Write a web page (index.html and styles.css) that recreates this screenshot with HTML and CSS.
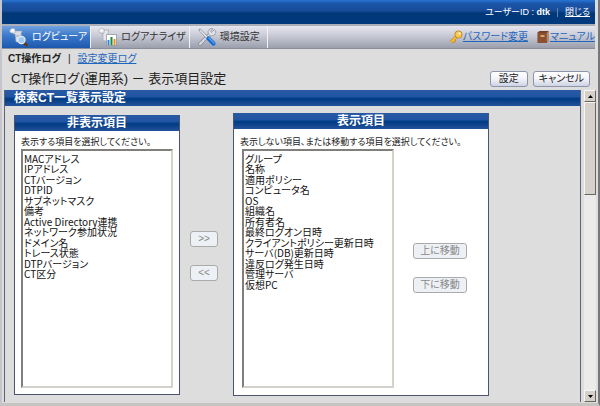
FILE: index.html
```html
<!DOCTYPE html>
<html lang="ja">
<head>
    <meta charset="UTF-8">
    <meta name="viewport" content="width=device-width, initial-scale=1.0">
    <title>CT操作ログ(運用系) - 表示項目設定</title>
    <link rel="stylesheet" href="styles.css">
</head>
<body>
<div class="window">

    <header class="topbar">
        <span>ユーザーID : <b>dtk</b></span>
        <span class="divider"></span>
        <a href="#">閉じる</a>
    </header>

    <div class="toolbar">
        <nav class="tabs">
            <a class="tab active" href="#">
                <svg class="tab-icon" viewBox="0 0 20 20">
                    <path d="M4 4h9l-1 3 2 8H7L6 7H4z" fill="#d9dde4" stroke="#98a2b3" stroke-width=".5"/>
                    <path d="M1 3q2-3 5-1v4H3Q0 6 1 3z" fill="#f4f5f8" stroke="#98a2b3" stroke-width=".5"/>
                    <path d="M7 9h5" stroke="#a1a9b7"/>
                    <path d="M15 16l2.500 2" stroke="#683716" stroke-width="2.800" stroke-linecap="round"/>
                    <circle cx="12.500" cy="13" r="3.600" fill="#9fccf4" stroke="#e4eaf2" stroke-width="1.200"/>
                </svg>
                ログビューア
            </a>
            <a class="tab" href="#">
                <svg class="tab-icon" viewBox="0 0 20 20">
                    <path d="M4 3h7l-1 3 1 8H5L5 6H3z" fill="#e6e7ea" stroke="#979ca7" stroke-width=".6"/>
                    <path d="M1 3q2-3 5-1v4H3Q0 6 1 3z" fill="#f4f5f8" stroke="#979ca7" stroke-width=".6"/>
                    <path d="M8.500 7.500h10v11h-10z" fill="#fff" stroke="#858b91" stroke-width=".7"/>
                    <path d="M10.500 18v-5" stroke="#2c86e4" stroke-width="2"/>
                    <path d="M13.500 18v-8" stroke="#158a3a" stroke-width="2"/>
                    <path d="M16.500 18v-6" stroke="#ee9426" stroke-width="2"/>
                </svg>
                ログアナライザ
            </a>
            <a class="tab" href="#">
                <svg class="tab-icon" viewBox="0 0 20 20">
                    <path d="M3 17L13 7" stroke="#858b95" stroke-width="3.600" stroke-linecap="round"/>
                    <path d="M3 17L13 7" stroke="#d9dce2" stroke-width="2.200" stroke-linecap="round"/>
                    <path d="M17.500 2.500l-3 3-1-1 2.500-3q-4-.5-5 3-.4 3.500 3 4.500 4.500 0 5-4z" fill="#e0e2e7" stroke="#858b95" stroke-width=".7"/>
                    <path d="M2 2l2 .5 7 7.500-1.500 1.500-7-7.500z" fill="#e5e6ea" stroke="#7e8590" stroke-width=".7"/>
                    <path d="M11.500 11.500l5 5" stroke="#176bd0" stroke-width="4.200" stroke-linecap="round"/>
                    <path d="M12 11l5 5" stroke="#59a8f4" stroke-width="1.200" stroke-linecap="round"/>
                </svg>
                環境設定
            </a>
        </nav>
        <div class="tools">
            <a class="tool" href="#">
                <svg class="tool-icon" viewBox="0 0 14 14">
                    <path d="M8 6l-6 6M4 10l2 2" stroke="#bb7a11" stroke-width="3"/>
                    <path d="M8 6l-6 6M4 10l1.500 1.500" stroke="#f6bd36" stroke-width="1.800"/>
                    <circle cx="9.500" cy="4.500" r="3.600" fill="#f9c94d" stroke="#ba7b16" stroke-width=".8"/>
                    <circle cx="10.500" cy="3.500" r="1.100" fill="#fff"/>
                </svg>
                <span>パスワード変更</span>
            </a>
            <a class="tool" href="#">
                <svg class="tool-icon" viewBox="0 0 14 14">
                    <path d="M3.500 1h9v10l-2 2h-9V2.500z" fill="#754126"/>
                    <path d="M10.500 3l2-1.500V11l-2 1.500z" fill="#b98e6c"/>
                    <path d="M2 2.800h8.500V13H2z" fill="#8c5030"/>
                    <path d="M4.500 5h4v2h-4z" fill="#d2a774"/>
                </svg>
                <span>マニュアル</span>
            </a>
        </div>
    </div>

    <nav class="subnav">
        <b>CT操作ログ</b>
        <span>|</span>
        <a href="#">設定変更ログ</a>
    </nav>

    <div class="title-row">
        <h1>CT操作ログ(運用系) － 表示項目設定</h1>
        <div class="actions">
            <button class="btn" type="button">設定</button>
            <button class="btn btn-wide" type="button">キャンセル</button>
        </div>
    </div>

    <div class="main">
        <section class="content">
            <h2 class="section-head">検索CT一覧表示設定</h2>
            <div class="columns">
                <div class="panel panel-hidden">
                    <h3>非表示項目</h3>
                    <div class="panel-body">
                        <label for="hidden-items">表示する項目を選択してください。</label>
                        <select id="hidden-items" class="list" multiple>
                            <option>MACアドレス</option>
                            <option>IPアドレス</option>
                            <option>CTバージョン</option>
                            <option>DTPID</option>
                            <option>サブネットマスク</option>
                            <option>備考</option>
                            <option>Active Directory連携</option>
                            <option>ネットワーク参加状況</option>
                            <option>ドメイン名</option>
                            <option>トレース状態</option>
                            <option>DTPバージョン</option>
                            <option>CT区分</option>
                        </select>
                    </div>
                </div>

                <div class="move">
                    <button class="btn" type="button" disabled>&gt;&gt;</button>
                    <button class="btn" type="button" disabled>&lt;&lt;</button>
                </div>

                <div class="panel panel-shown">
                    <h3>表示項目</h3>
                    <div class="panel-body">
                        <label for="shown-items">表示しない項目、または移動する項目を選択してください。</label>
                        <div class="sortable">
                            <select id="shown-items" class="list" multiple>
                                <option>グループ</option>
                                <option>名称</option>
                                <option>適用ポリシー</option>
                                <option>コンピュータ名</option>
                                <option>OS</option>
                                <option>組織名</option>
                                <option>所有者名</option>
                                <option>最終ログオン日時</option>
                                <option>クライアントポリシー更新日時</option>
                                <option>サーバ(DB)更新日時</option>
                                <option>違反ログ発生日時</option>
                                <option>管理サーバ</option>
                                <option>仮想PC</option>
                            </select>
                            <div class="order">
                                <button class="btn" type="button" disabled>上に移動</button>
                                <button class="btn" type="button" disabled>下に移動</button>
                            </div>
                        </div>
                    </div>
                </div>
            </div>
        </section>

        <div class="scrollbar">
            <button type="button" aria-label="上へスクロール">
                <svg viewBox="0 0 5 3"><path d="M0 3h5L2.500 0z"/></svg>
            </button>
            <div class="thumb"></div>
            <button class="scroll-down" type="button" aria-label="下へスクロール">
                <svg viewBox="0 0 5 3"><path d="M0 0h5L2.500 3z"/></svg>
            </button>
        </div>
    </div>

</div>
</body>
</html>
```

FILE: styles.css
```css
* {
    box-sizing: border-box;
}

body {
    margin: 0;
    font-family: "Liberation Sans", "Noto Sans CJK JP", sans-serif;
    font-size: 10px;
    line-height: 12px;
    font-feature-settings: "palt";
    color: #222;
    background: #ddd;
}

h1, h2, h3 {
    margin: 0;
}

button, select {
    font: inherit;
    font-feature-settings: inherit;
}

a {
    color: #1f66bd;
}

.window {
    display: flex;
    flex-direction: column;
    height: 100vh;
    border-left: 2px solid #c5c5cb;
    border-right: 2px solid #77777b;
    border-bottom: 3px solid #c6c4c0;
    white-space: nowrap;
}

/* header */
.topbar {
    display: flex;
    justify-content: flex-end;
    align-items: center;
    gap: 7px;
    height: 24px;
    margin-right: 3px;
    padding-right: 5px;
    color: #fff;
    font-size: 9px;
    background: linear-gradient(#2874d4, #1b55a8 15%, #174b99 45%, #003878 55%, #003b7e);
}

.topbar a {
    color: #fff;
}

.divider {
    width: 1px;
    height: 9px;
    background: #5b83b8;
}

.toolbar {
    display: flex;
    justify-content: space-between;
    height: 25px;
    margin-right: 3px;
    border-top: 2px solid #aaaeb9;
    border-bottom: 1px solid #8b8e9b;
    background: linear-gradient(#e6e6ef, #cbcdd8 40%, #9b9fad);
}

.tabs, .tools {
    display: flex;
}

.tab {
    display: flex;
    align-items: center;
    gap: 3px;
    padding: 0 3px 0 7px;
    color: #333;
    text-decoration: none;
    border-right: 1px solid #f2f2f6;
}

.tab:last-child {
    padding-right: 7px;
}

.tab.active {
    color: #fff;
    background: linear-gradient(#70a2e0, #3b78c9 45%, #1c58ad);
}

.tab-icon {
    width: 20px;
    height: 20px;
    fill: none;
}

.tools {
    gap: 8px;
}

.tool {
    display: flex;
    align-items: center;
}

.tool-icon {
    width: 14px;
    height: 14px;
    fill: none;
}

/* sub navigation and title */
.subnav {
    display: flex;
    align-items: center;
    gap: 7px;
    height: 19px;
    padding-left: 6px;
}

.title-row {
    display: flex;
    justify-content: space-between;
    align-items: center;
    height: 22px;
    padding: 0 8px 0 9px;
}

h1 {
    font-size: 13px;
    font-weight: normal;
    line-height: 16px;
    font-feature-settings: normal;
}

.actions {
    display: flex;
    gap: 5px;
}

.btn {
    min-width: 38px;
    height: 16px;
    padding: 0 5px;
    color: #222;
    line-height: 12px;
    border: 1px solid #8d95ab;
    border-radius: 3px;
    background: linear-gradient(#fff, #f2f3f9 50%, #cdd3e3);
}

.btn-wide {
    min-width: 57px;
}

.btn:disabled {
    color: #888;
    border-color: #aaa;
    background: #edf1f5;
}

/* main area */
.main {
    display: flex;
    flex: 1;
    gap: 3px;
    min-height: 0;
    padding: 0 2px 1px;
}

.content {
    flex: 1;
    overflow: hidden;
    border-left: 1px solid #5c6577;
    border-right: 1px solid #5c6577;
}

.section-head, .panel h3 {
    height: 16px;
    color: #fff;
    font-size: 12px;
    line-height: 16px;
    background: linear-gradient(#2a59a3, #2156a4 40%, #003b83 55%, #23529b);
}

.section-head {
    padding-left: 9px;
}

.columns {
    display: flex;
    align-items: flex-start;
    padding: 7px 9px 0;
}

.panel {
    background: #fff;
    border: 1px solid #4b566e;
    border-top: 0;
}

.panel h3 {
    text-align: center;
}

.panel-body {
    padding: 4px 6px 6px;
}

.panel-body label {
    display: block;
    height: 14px;
    font-size: 9px;
    line-height: 14px;
}

.panel-hidden {
    width: 166px;
    margin-top: 2px;
}

.panel-shown {
    width: 256px;
}

.panel-shown .panel-body {
    padding: 6px 6px 7px;
}

.list {
    display: block;
    width: 152px;
    height: 239px;
    padding: 0;
    color: #111;
    font-family: "Noto Sans CJK JP", sans-serif;
    background: #fff;
    border: 2px inset #d5d2cc;
    border-radius: 0;
    outline: 0;
    overflow: hidden;
}

.list option {
    height: 10px;
    min-height: 0;
    padding: 0 1px;
    line-height: 6px;
}

.list option:nth-child(even) {
    height: 11px;
}

.move {
    display: grid;
    gap: 18px;
    margin: 118px 15px 0 10px;
}

.move .btn {
    min-width: 28px;
    padding: 0;
}

.sortable {
    display: flex;
    gap: 19px;
    padding-left: 2px;
}

.order {
    display: grid;
    align-content: start;
    gap: 18px;
    padding-top: 94px;
}

.order .btn {
    min-width: 54px;
}

/* scrollbar */
.scrollbar {
    display: flex;
    flex-direction: column;
    width: 12px;
    background: #ecebe9;
}

.scrollbar button, .thumb {
    background: #d5d1ca;
    border: 1px solid;
    border-color: #f7f6f4 #69665f #69665f #f7f6f4;
}

.scrollbar button {
    display: flex;
    align-items: center;
    justify-content: center;
    height: 12px;
    padding: 0;
}

.scrollbar svg {
    width: 5px;
    height: 3px;
}

.thumb {
    height: 93px;
}

.scroll-down {
    margin-top: auto;
}
```
